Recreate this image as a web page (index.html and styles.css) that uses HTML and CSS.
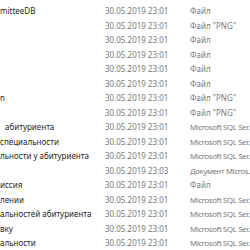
FILE: index.html
```html
<!DOCTYPE html>
<html lang="ru">
<head>
<meta charset="utf-8">
<link rel="stylesheet" href="styles.css">
</head>
<body>
<div class="list">
  <div class="row"><span class="name">mitteeDB</span><span class="date">30.05.2019 23:01</span><span class="type">Файл</span></div>
  <div class="row"><span class="name"></span><span class="date">30.05.2019 23:01</span><span class="type">Файл "PNG"</span></div>
  <div class="row"><span class="name"></span><span class="date">30.05.2019 23:01</span><span class="type">Файл</span></div>
  <div class="row"><span class="name"></span><span class="date">30.05.2019 23:01</span><span class="type">Файл</span></div>
  <div class="row"><span class="name"></span><span class="date">30.05.2019 23:01</span><span class="type">Файл</span></div>
  <div class="row"><span class="name"></span><span class="date">30.05.2019 23:01</span><span class="type">Файл</span></div>
  <div class="row"><span class="name">n</span><span class="date">30.05.2019 23:01</span><span class="type">Файл "PNG"</span></div>
  <div class="row"><span class="name"></span><span class="date">30.05.2019 23:01</span><span class="type">Файл "PNG"</span></div>
  <div class="row"><span class="name indent">абитуриента</span><span class="date">30.05.2019 23:01</span><span class="type long">Microsoft SQL Ser.</span></div>
  <div class="row"><span class="name">специальности</span><span class="date">30.05.2019 23:01</span><span class="type long">Microsoft SQL Ser.</span></div>
  <div class="row"><span class="name">льности у абитуриента</span><span class="date">30.05.2019 23:01</span><span class="type long">Microsoft SQL Ser.</span></div>
  <div class="row"><span class="name"></span><span class="date">30.05.2019 23:03</span><span class="type long">Документ Micros.</span></div>
  <div class="row"><span class="name">иссия</span><span class="date">30.05.2019 23:01</span><span class="type">Файл</span></div>
  <div class="row"><span class="name">лении</span><span class="date">30.05.2019 23:01</span><span class="type long">Microsoft SQL Ser.</span></div>
  <div class="row"><span class="name">альностей абитуриента</span><span class="date">30.05.2019 23:01</span><span class="type long">Microsoft SQL Ser.</span></div>
  <div class="row"><span class="name">вку</span><span class="date">30.05.2019 23:01</span><span class="type long">Microsoft SQL Ser.</span></div>
  <div class="row"><span class="name">альности</span><span class="date">30.05.2019 23:01</span><span class="type long">Microsoft SQL Ser.</span></div>
</div>
</body>
</html>
```

FILE: styles.css
```css
html, body {
  margin: 0;
  padding: 0;
  background: #ffffff;
}
body {
  width: 250px;
  height: 250px;
  overflow: hidden;
  font-family: "Noto Sans", "Open Sans", sans-serif;
  font-size: 8px;
}
.list {
  padding-top: 4px;
}
.row {
  display: grid;
  grid-template-columns: 105px 85px 60px;
  height: 14.5px;
  line-height: 14.5px;
  white-space: nowrap;
}
.row > span {
  overflow: hidden;
}
.name {
  color: #262626;
}
.name.indent {
  padding-left: 5px;
}
.date, .type {
  color: #7a7a7a;
}
.type.long {
  font-size: 7.8px;
  letter-spacing: -0.35px;
}
```
